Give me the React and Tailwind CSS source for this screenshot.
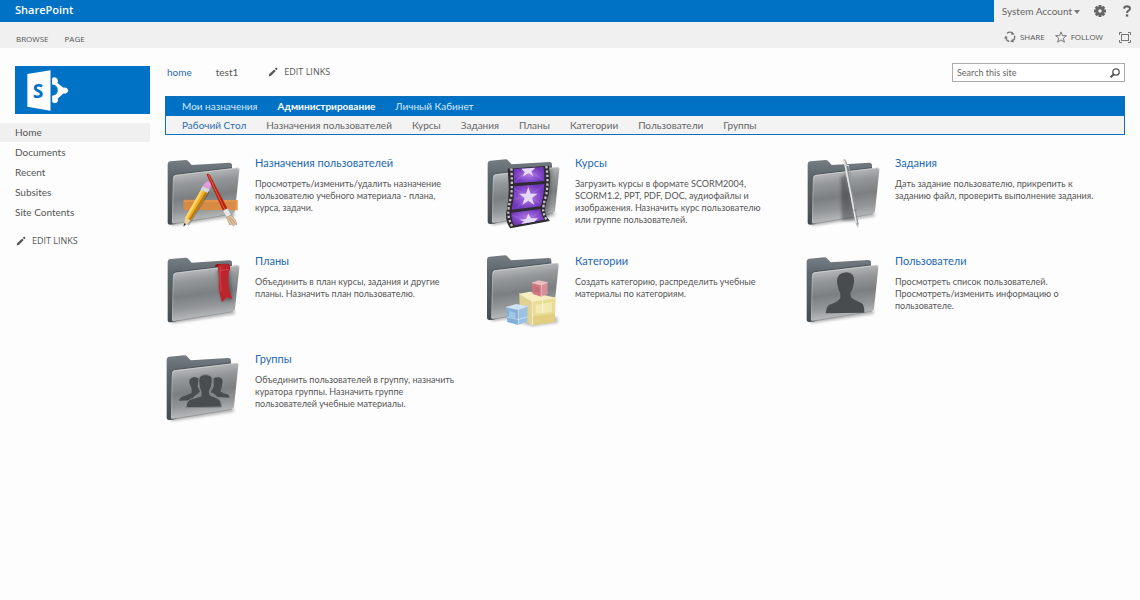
import React from "react";

const STAR = "M0 -29 L7 -9 L28 -9 L11 4 L18 25 L0 12 L-18 25 L-11 4 L-28 -9 L-7 -9Z";

function Folder({ id, dx = 0, dy = 0, children }) {
  return (
    <svg viewBox="15 15 240 225" className="h-[75px] w-20 shrink-0" aria-hidden="true">
      <defs>
        <linearGradient id={id + "-back"} x1="0" y1="0" x2="0" y2="1">
          <stop offset="0" stopColor="#767e84" />
          <stop offset="0.25" stopColor="#5d666c" />
          <stop offset="1" stopColor="#464d52" />
        </linearGradient>
        <linearGradient id={id + "-front"} x1="0.42" y1="0" x2="0.58" y2="1">
          <stop offset="0.05" stopColor="#b9bbbc" />
          <stop offset="0.25" stopColor="#94979a" />
          <stop offset="0.5" stopColor="#7b7f82" />
          <stop offset="0.72" stopColor="#939698" />
          <stop offset="0.95" stopColor="#bfc1c2" />
        </linearGradient>
        <filter id={id + "-soft"} x="-20%" y="-20%" width="140%" height="140%">
          <feGaussianBlur stdDeviation="4" />
        </filter>
      </defs>
      <g transform={`translate(${dx} ${dy})`}>
        <path d="M24 216 L224 188 L224 199 L40 227Z" fill="#000" opacity="0.3" filter={`url(#${id}-soft)`} />
        <path d="M23 44 Q23 35 31 34 L76 30 Q82 30 85 34 L95 45 L208 38 Q216 38 216 46 L216 150 L42 223 L30 224 Q23 224 23 216Z" fill={`url(#${id}-back)`} />
        <path d="M37 80 Q40 72 48 71 L216 51 V58 L46 78 L42 90 L40 200 L35 210Z" fill="#3a4044" opacity="0.4" />
        <path d="M46 75 L232 53 Q239 53 238 60 L225 184 Q224 190 218 191 L42 221 Q35 222 36 215 L39 83 Q40 76 46 75Z" fill={`url(#${id}-front)`} />
        <path d="M41 84 Q42 77 48 76 L232 54 Q238 54 237 61" fill="none" stroke="#d6d8d9" strokeWidth="2" />
        <path d="M40 84 L37 218" fill="none" stroke="#c5c8c9" strokeWidth="2" opacity="0.8" />
        <path d="M38 222 L218 192" fill="none" stroke="#6d7276" strokeWidth="1.5" />
        {children}
      </g>
    </svg>
  );
}

function ToolsIcon() {
  return (
    <Folder id="tools">
      <path d="M71 149 L233 150 L233 181 L70 180Z" fill="#e08a3a" opacity="0.88" />
      <path d="M71 153 H233" stroke="#eea25a" strokeWidth="4" opacity="0.6" />
      <path d="M84 226 L147 125" stroke="#333" strokeWidth="6" opacity="0.3" />
      <path d="M123 119 L143 128 L92 212 L71 228 L76 202Z" fill="#f0b02a" />
      <path d="M123 119 L129 122 L82 206 L76 202Z" fill="#fbd768" />
      <path d="M137 125 L143 128 L92 212 L87 208Z" fill="#b97912" />
      <path d="M76 202 L92 212 L71 228Z" fill="#ebd0a0" />
      <path d="M73 219 L78 223 L70 230Z" fill="#333" />
      <path d="M128 108 L149 118 L143 129 L122 119Z" fill="#d5d8d8" />
      <path d="M129 109 Q134 95 143 94 Q154 96 154 104 L149 118Z" fill="#e29add" />
      <path d="M140 74 Q143 68 150 76 L203 177 L190 184Z" fill="#b3200f" />
      <path d="M145 75 L195 180" stroke="#e8604c" strokeWidth="3" />
      <path d="M188 182 L203 175 L214 195 L200 203Z" fill="#e5e7e7" stroke="#77797a" strokeWidth="1" />
      <path d="M199 202 L215 195 Q229 209 231 225 L224 222 L221 229 L215 223 L209 225Z" fill="#dcc3a4" stroke="#8b6440" strokeWidth="1" />
      <path d="M207 204 L218 223 M211 202 L225 220" stroke="#805c3e" strokeWidth="1" />
    </Folder>
  );
}

const FRAME_EDGE_LEFT = "M94 57 Q97 100 94 140 Q84 175 85 195 Q88 218 99 235";
const FRAME_EDGE_RIGHT = "M199 50 Q206 95 199 135 Q188 172 190 187 Q193 203 203 216";

function FilmIcon() {
  return (
    <Folder id="film" dy={-2}>
      <defs>
        <radialGradient id="film-violet">
          <stop offset="0" stopColor="#b27be8" />
          <stop offset="1" stopColor="#7238bb" />
        </radialGradient>
      </defs>
      <path d="M204 62 L218 60 L209 150 L207 203 L185 200Z" fill="#222" opacity="0.3" filter="url(#film-soft)" />
      <path d="M83 58 L207 49 Q213 92 206 134 Q193 176 196 190 Q199 205 210 215 L91 237 Q75 218 79 188 Q88 150 86 105Z" fill="#2d2a30" />
      <path d="M101 59 L190 53 Q194 74 193 95 L102 102Z" fill="url(#film-violet)" />
      <path d="M102 111 L193 104 Q191 145 182 171 L95 181 Q103 148 102 111Z" fill="url(#film-violet)" />
      <path d="M94 190 L181 179 Q184 199 193 211 L104 228 Q92 211 94 190Z" fill="url(#film-violet)" />
      <path d="M145 140 L103 118 M145 140 L112 176 M145 140 L188 112 M145 140 L180 162 M145 140 L144 108 M145 140 L100 150 M145 62 L106 96 M145 62 L188 91 M146 218 L98 198 M146 218 L178 184" stroke="#d2adff" strokeWidth="2" opacity="0.35" />
      <g fill="#e6dafa">
        <path d="M124 58 L166 55 L154 67 L160 80 L145 72 L128 82 L134 69Z" />
        <path d={STAR} transform="translate(145 142)" />
        <path d="M145 193 L153 207 L174 207 L163 217 L123 224 L132 216 L118 211 L138 209Z" />
      </g>
      <path d={FRAME_EDGE_LEFT} fill="none" stroke="#c2bfc6" strokeWidth="7" strokeDasharray="7 6" />
      <path d={FRAME_EDGE_RIGHT} fill="none" stroke="#c2bfc6" strokeWidth="7" strokeDasharray="7 6" />
    </Folder>
  );
}

function PenIcon() {
  return (
    <Folder id="pen">
      <path d="M122 82 L138 72 L168 212 L126 212Z" fill="#252829" opacity="0.4" filter="url(#pen-soft)" />
      <path d="M130 30 Q133 24 138 31 L176 222 L174 234 L168 223Z" fill="#babdbe" />
      <path d="M133 33 L169 219" stroke="#e4e6e6" strokeWidth="4" />
      <path d="M138 34 L174 223" stroke="#707476" strokeWidth="2" />
      <path d="M137 47 L145 47 L156 93" fill="none" stroke="#989c9e" strokeWidth="4" />
      <path d="M138 45 L147 47" stroke="#eee" strokeWidth="3" />
      <path d="M161 181 L170 179" stroke="#63676a" strokeWidth="2" />
    </Folder>
  );
}

function BookmarkIcon() {
  return (
    <Folder id="mark" dy={-1}>
      <path d="M170 69 L210 65 L218 158 L185 161Z" fill="#222" opacity="0.35" filter="url(#mark-soft)" />
      <path d="M165 57 Q164 49 174 49 L201 48 Q210 49 210 57 L210 68 L176 73 L174 58Z" fill="#8e1218" />
      <path d="M174 58 Q174 50 184 50 L202 49 Q210 51 209 60 Q202 95 208 128 L217 154 L201 149 L186 163 Q173 128 177 93Z" fill="#bd252d" />
      <path d="M181 56 Q179 95 183 132" fill="none" stroke="#e0565a" strokeWidth="4" opacity="0.5" />
      <path d="M178 69 L208 65" stroke="#f0787c" strokeWidth="2" opacity="0.5" />
    </Folder>
  );
}

function CubesIcon() {
  return (
    <Folder id="cubes" dx={-2} dy={-8}>
      <path d="M84 222 L160 243 L235 232 L235 215 L165 215Z" fill="#222" opacity="0.3" filter="url(#cubes-soft)" />
      <g strokeLinejoin="round">
        <path d="M120 145 L152 139 L229 157 L159 168Z" fill="#f6eebf" />
        <path d="M120 145 L159 168 L158 239 L122 217Z" fill="#e2d292" />
        <path d="M159 168 L229 157 L226 230 L159 240Z" fill="#eadb94" />
        <path d="M168 178 L219 170 L217 200 L168 206Z" fill="#f3e9b4" opacity="0.9" />
        <path d="M160 214 L227 204 L226 230 L159 240Z" fill="#d8c36c" opacity="0.55" />
        <path d="M120 145 L159 168 L229 157 M159 168 V239 M190 164 V204" fill="none" stroke="#fffbe0" strokeWidth="3" opacity="0.75" />
      </g>
      <g strokeLinejoin="round">
        <path d="M158 112 L178 105 L205 111 L186 119Z" fill="#efbdc0" />
        <path d="M158 112 L186 119 V154 L160 146Z" fill="#d17982" />
        <path d="M186 119 L205 111 V145 L186 154Z" fill="#d58f96" />
        <path d="M165 123 L180 127 V143 L165 139Z" fill="#c26470" opacity="0.6" />
        <path d="M158 112 L186 119 L205 111 M186 119 V154" fill="none" stroke="#f8d4d6" strokeWidth="2" />
      </g>
      <g strokeLinejoin="round">
        <path d="M80 185 L110 176 L145 182 L117 193Z" fill="#cfe3f2" />
        <path d="M80 185 L117 193 V239 L84 230Z" fill="#82afd8" />
        <path d="M117 193 L145 182 L144 228 L117 239Z" fill="#9cc2e2" />
        <path d="M89 197 L109 202 V219 L89 214Z" fill="#a9cbe8" opacity="0.8" />
        <path d="M80 185 L117 193 L145 182 M117 193 V239 M83 215 L117 223 L144 214" fill="none" stroke="#e1f0fb" strokeWidth="2" opacity="0.9" />
      </g>
    </Folder>
  );
}

function UserIcon() {
  return (
    <Folder id="user" dx={-3} dy={-2}>
      <path d="M114 104 Q113 76 143 75 Q168 77 165 104 L162 120 Q159 131 154 136 L156 150 Q162 157 187 167 Q197 173 196 196 L80 198 Q83 176 91 172 Q119 163 124 151 V137 Q118 130 114 104Z" fill="#484c4e" />
    </Folder>
  );
}

function GroupIcon() {
  return (
    <Folder id="group" dx={-3} dy={-2}>
      <g fill="#494d4f">
        <path d="M91 112 Q88 98 106 95 L119 99 L116 124 L123 139 L104 154 L98 165 L60 166 Q61 155 78 151 L98 143 V130Z" />
        <path d="M164 98 Q190 90 191 107 L188 126 L184 138 Q192 145 205 147 Q213 151 211 157 L176 155 L163 144 L155 141 L164 125Z" />
        <path d="M119 105 Q120 88 140 88 Q161 88 160 107 L157 124 L151 137 L153 149 L174 158 Q188 164 187 185 L81 187 Q83 166 94 162 L126 152 V139 Q120 129 119 105Z" stroke="#84888a" strokeWidth="3" />
      </g>
    </Folder>
  );
}

const CARDS = [
  { title: "Назначения пользователей", Icon: ToolsIcon, lines: ["Просмотреть/изменить/удалить назначение", "пользователю учебного материала - плана,", "курса, задачи."] },
  { title: "Курсы", Icon: FilmIcon, lines: ["Загрузить курсы в формате SCORM2004,", "SCORM1.2, PPT, PDF, DOC, аудиофайлы и", "изображения. Назначить курс пользователю", "или группе пользователей."] },
  { title: "Задания", Icon: PenIcon, lines: ["Дать задание пользователю, прикрепить к", "заданию файл, проверить выполнение задания."] },
  { title: "Планы", Icon: BookmarkIcon, lines: ["Объединить в план курсы, задания и другие", "планы. Назначить план пользователю."] },
  { title: "Категории", Icon: CubesIcon, lines: ["Создать категорию, распределить учебные", "материалы по категориям."] },
  { title: "Пользователи", Icon: UserIcon, lines: ["Просмотреть список пользователей.", "Просмотреть/изменить информацию о", "пользователе."] },
  { title: "Группы", Icon: GroupIcon, lines: ["Объединить пользователей в группу, назначить", "куратора группы. Назначить группе", "пользователей учебные материалы."] },
];

const SUB_NAV = ["Рабочий Стол", "Назначения пользователей", "Курсы", "Задания", "Планы", "Категории", "Пользователи", "Группы"];
const SIDE_NAV = ["Home", "Documents", "Recent", "Subsites", "Site Contents"];

function Pencil() {
  return (
    <svg viewBox="0 0 10 10" className="size-[10px]" fill="#555" aria-hidden="true">
      <path d="M0.6 9.4 L1.3 7 L6.2 2.4 L7.7 3.9 L3 8.7Z" />
      <path d="M6.8 1.8 L7.8 0.8 Q8.2 0.5 8.6 0.8 L9.3 1.5 Q9.6 1.9 9.3 2.3 L8.3 3.3Z" />
    </svg>
  );
}

function EditLinks() {
  return (
    <button type="button" className="flex items-center gap-[6px] font-['Open_Sans',sans-serif] text-[9px] leading-4 text-[#555]">
      <Pencil />
      EDIT LINKS
    </button>
  );
}

function Logo() {
  return (
    <svg viewBox="80 205 130 130" className="h-[43px] w-[43px]" role="img" aria-label="SharePoint">
      <path d="M81 220 L151 209 V331 L81 319Z" fill="#fff" />
      <text x="113" y="292" textAnchor="middle" className="fill-[#0072c6] font-['Open_Sans',sans-serif] text-[58px] font-bold">S</text>
      <path d="M156 232 Q165 226 172 235 Q175 241 172 247 L190 262 Q201 258 205 270 Q202 281 190 279 L173 294 Q176 302 169 307 Q161 311 156 304 V286 L162 284 Q173 280 173 269 Q173 257 163 253 L156 252Z" fill="#fff" />
    </svg>
  );
}

export default function App() {
  return (
    <div className="min-h-screen bg-[#fdfdfd] font-['Lato','Open_Sans',sans-serif] text-[#555]">
      <header className="bg-[#f0f0f0]">
        <div className="flex h-[22px]">
          <div className="flex flex-1 items-center bg-[#0072c6] pb-[2px] pl-[15px] font-['Open_Sans',sans-serif] text-[11px] leading-4 font-semibold text-white">SharePoint</div>
          <div className="flex items-center pr-2 pl-2">
            <button type="button" className="flex items-center gap-[2px] text-[10px] leading-4 text-[#666]">
              System Account
              <svg viewBox="0 0 6 4" className="mt-px h-1 w-[6px]" fill="#777" aria-hidden="true"><path d="M0 0H6L3 4Z" /></svg>
            </button>
            <button type="button" aria-label="Settings" className="ml-[14px]">
              <svg viewBox="-12 -12 24 24" className="size-3" aria-hidden="true">
                <g fill="#666">
                  {[0, 45, 90, 135].map((a) => (
                    <rect key={a} x="-3" y="-12" width="6" height="24" transform={`rotate(${a})`} />
                  ))}
                  <circle r="9" />
                </g>
                <circle r="3.5" fill="#f0f0f0" />
              </svg>
            </button>
            <button type="button" aria-label="Help" className="ml-4">
              <svg viewBox="0 0 10 12" className="h-3 w-[10px]" aria-hidden="true">
                <path d="M2 3.6 Q2.4 1.2 5 1.2 Q8 1.3 8 3.6 Q8 5 6.3 5.8 Q5 6.5 5 8" fill="none" stroke="#666" strokeWidth="2" />
                <rect x="3.8" y="9.3" width="2.4" height="2.3" fill="#666" />
              </svg>
            </button>
          </div>
        </div>
        <div className="flex h-[26px] items-center justify-between pr-[9px] pl-4 font-['Open_Sans',sans-serif] text-[8px] leading-4">
          <div className="flex gap-4 pt-2">
            <button type="button">BROWSE</button>
            <button type="button">PAGE</button>
          </div>
          <div className="flex items-center pt-1">
            <button type="button" className="flex items-center gap-1">
              <svg viewBox="0 0 12 12" className="size-3" fill="none" stroke="#777" strokeWidth="1.3" aria-hidden="true">
                <path d="M3 2.4 A4.5 4.5 0 0 1 8.5 2.1 M10.4 4.6 A4.5 4.5 0 0 1 8.7 9.8 M5.3 10.5 A4.5 4.5 0 0 1 1.8 7.3" />
                <path d="M7.4 0.5 L10.8 3.2 L7.4 4Z M9.7 11.4 L6 10.5 L8.8 8Z M0 7.6 L2 4.5 L3.8 7.3Z" fill="#777" stroke="none" />
              </svg>
              SHARE
            </button>
            <button type="button" className="ml-[10px] flex items-center gap-1">
              <svg viewBox="0 0 12 12" className="size-3" fill="none" stroke="#777" aria-hidden="true">
                <path d="M6 0.9 L7.4 4.6 L11.4 4.7 L8.3 7.2 L9.4 11.2 L6 8.9 L2.6 11.2 L3.7 7.2 L0.6 4.7 L4.6 4.6Z" />
              </svg>
              FOLLOW
            </button>
            <button type="button" aria-label="Focus on content" className="ml-4">
              <svg viewBox="0 0 12 11" className="h-[11px] w-3" fill="none" stroke="#777" aria-hidden="true">
                <path d="M0.5 3V0.5H3 M9 0.5H11.5V3 M11.5 8V10.5H9 M3 10.5H0.5V8" />
                <rect x="2.5" y="2.5" width="7" height="6" />
              </svg>
            </button>
          </div>
        </div>
      </header>

      <div className="flex gap-[15px] pt-[18px] pr-[15px]">
        <aside className="w-[150px] shrink-0">
          <a href="#home" className="ml-[15px] flex h-12 items-center bg-[#0072c6] pl-3"><Logo /></a>
          <nav className="mt-[9px] text-[10px]" aria-label="Site">
            {SIDE_NAV.map((label, i) => (
              <a key={label} href={"#" + label} className={i === 0 ? "block bg-[#f0f0f0] pl-[15px] leading-[19px]" : "block pl-[15px] leading-5"}>{label}</a>
            ))}
          </nav>
          <div className="mt-[11px] pl-4"><EditLinks /></div>
        </aside>

        <main className="min-w-0 flex-1">
          <div className="flex h-[30px] items-start justify-between">
            <nav className="-mt-[2px] flex items-center pl-[2px] text-[10px] leading-3" aria-label="Top links">
              <a href="#home" className="text-[#2b6cb0]">home</a>
              <a href="#test1" className="ml-6">test1</a>
              <div className="ml-[30px]"><EditLinks /></div>
            </nav>
            <form className="-mt-[3px] flex h-[19px] w-[173px] items-center border border-[#ababab] bg-white pr-1 pl-1" onSubmit={(e) => e.preventDefault()}>
              <input type="text" aria-label="Search this site" placeholder="Search this site" className="min-w-0 flex-1 text-[9px] leading-4 outline-none placeholder:text-[#666]" />
              <button type="submit" aria-label="Search">
                <svg viewBox="0 0 10 10" className="size-[10px]" fill="none" stroke="#555" aria-hidden="true">
                  <circle cx="6" cy="4" r="3.2" strokeWidth="1.3" />
                  <path d="M3.7 6.3 L0.6 9.4" strokeWidth="2" />
                </svg>
              </button>
            </form>
          </div>

          <nav className="border border-[#0f6fba] bg-[#f3f3f3] text-[10px]" aria-label="Sections">
            <div className="flex gap-5 bg-[#0072c6] px-4 leading-[19px] text-[#d8eafa]">
              <a href="#my">Мои назначения</a>
              <a href="#admin" className="font-bold text-white">Администрирование</a>
              <a href="#cabinet">Личный Кабинет</a>
            </div>
            <div className="flex gap-5 px-4 leading-[18px]">
              {SUB_NAV.map((label, i) => (
                <a key={label} href={"#" + label} className={i === 0 ? "text-[#2b6cb0]" : "text-[#666]"}>{label}</a>
              ))}
            </div>
          </nav>

          <div className="mt-5 grid grid-cols-3 gap-y-[23px]">
            {CARDS.map(({ title, Icon, lines }) => (
              <article key={title} className="flex h-[75px] gap-[10px]">
                <Icon />
                <div className="min-w-0">
                  <h2 className="text-[11px] leading-4 text-[#2268b2]"><a href={"#" + title}>{title}</a></h2>
                  <p className="mt-[7px] text-[9px] leading-3 whitespace-pre">{lines.join("\n")}</p>
                </div>
              </article>
            ))}
          </div>
        </main>
      </div>
    </div>
  );
}
